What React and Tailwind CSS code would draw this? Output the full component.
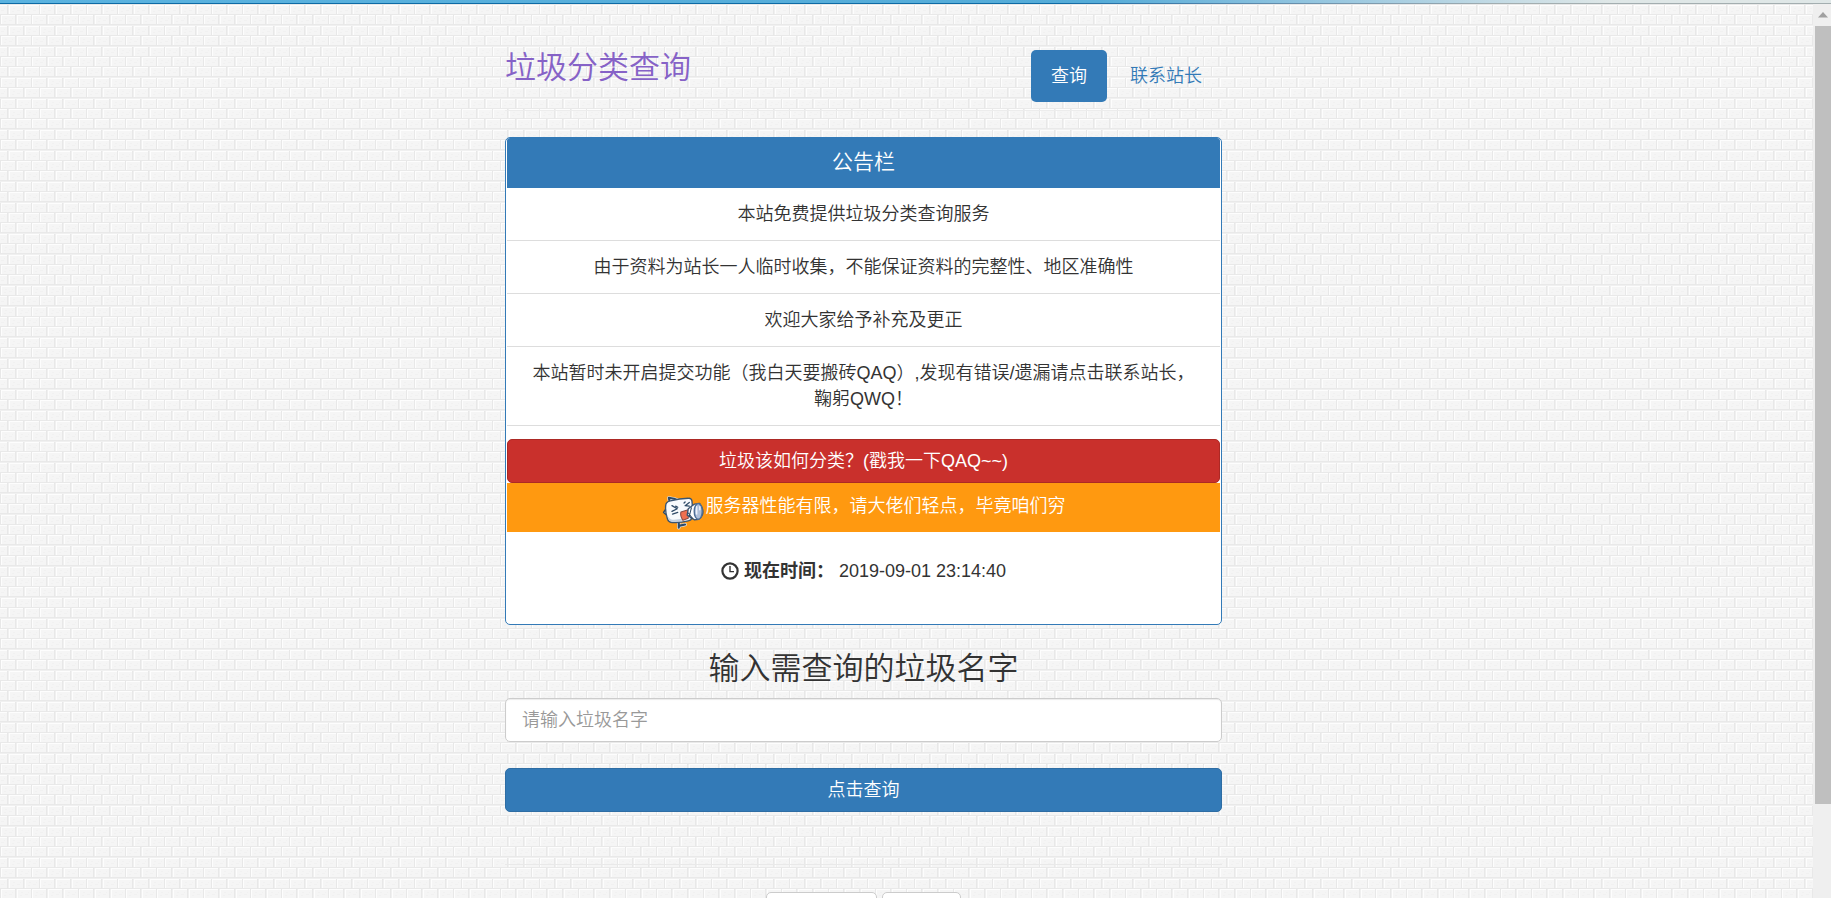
import React, { useState } from 'react';

const notices = [
    '本站免费提供垃圾分类查询服务',
    '由于资料为站长一人临时收集，不能保证资料的完整性、地区准确性',
    '欢迎大家给予补充及更正',
    '本站暂时未开启提交功能（我白天要搬砖QAQ）,发现有错误/遗漏请点击联系站长，鞠躬QWQ！',
];

// One wall tile: 8 bricks wide, 10 courses high
const bricks = [];
for (let row = 0; row < 10; row++) {
    for (let col = 0; col < 9; col++) {
        bricks.push({
            x: Math.round(col * 15.625 - (row % 2 ? 7.8 : 0)),
            y: Math.round(row * 10.4),
        });
    }
}

// Brick wall behind the whole page
const BrickWall = () => (
    <svg className="absolute inset-0 w-full h-full" aria-hidden="true">
        <defs>
            <pattern id="bricks" x="9" y="5" width="125" height="104" patternUnits="userSpaceOnUse">
                <rect width="125" height="104" fill="#f0f0f0" />
                {bricks.map(({ x, y }) => (
                    <g key={`${x}-${y}`} transform={`translate(${x} ${y})`}>
                        <rect width="14" height="9" fill="#f5f5f5" />
                        <path d="M0 .5h14M.5 0v9" stroke="#fdfdfd" />
                        <path d="M-1 9.500h15" stroke="#e9e9e9" />
                        <path d="M14.500 0v10" stroke="#e8e8e8" />
                        <path d="M4 3.500h2M8 5.500h3M3 6.500h2M11 3.500h1" stroke="#f1f1f1" />
                    </g>
                ))}
            </pattern>
        </defs>
        <rect width="100%" height="100%" fill="url(#bricks)" />
    </svg>
);

const ClockIcon = () => (
    <svg className="w-[18px] h-[18px]" viewBox="0 0 18 18" fill="none" stroke="#333" aria-hidden="true">
        <circle cx="9" cy="9" r="7.6" strokeWidth="2.2" />
        <path d="M9 4v5.600h4" strokeWidth="1.4" />
    </svg>
);

const MegaphoneFace = () => (
    <svg className="w-[42px] h-[34px] shrink-0" viewBox="0 0 40 32" fill="none" strokeLinejoin="round" strokeLinecap="round" aria-hidden="true">
        <path d="m7 4-.5-2.500 5 1 3 1M16 25v5M17 28l5-1" stroke="#e8ecf0" strokeWidth="3.200" />
        <path d="m7 4-.5-2.500 5 1 3 1M16 25v5M17 28l5-1" stroke="#2f4a66" strokeWidth="2" />
        <path d="M3 13 1.500 15.500l2.500 2" stroke="#2f4a66" strokeWidth="1.400" fill="#fff" />
        <path d="M8 4.500Q17 2 25 2q3-.5 3.500 2.500Q29.500 12 28 21q0 2-3 2.500Q17 25.500 10 25q-4 0-5-4Q3 15 3.500 9q0-3.500 4.500-4.500z" fill="#f8fafc" stroke="#3b5571" strokeWidth="1.300" />
        <path d="M5.500 19q2 3.500 6 3.500l8-1v2L10 24.300Q6 24 5.500 19z" fill="#c3d0de" />
        <path d="m9.500 9 5 3-5 2.500M10 17l5-1.500M13 9.500l2 1M26 6l-4 3 4 .5M22 5.500l-1 1" stroke="#2f4a66" strokeWidth="1.200" />
        <path d="m18 15 7-2v8l-5 2q-3-4-2-8z" fill="#f1704f" stroke="#8a4a44" />
        <path d="m25 12 6-4.500 5-.5q3 4 3 8t-4 7l-4 .5-7-4.500z" fill="#fff" stroke="#3b5571" strokeWidth="1.300" />
        <ellipse cx="34.500" cy="14.500" rx="3.800" ry="7.500" fill="#aebfd9" stroke="#4f6f96" strokeWidth="1.300" />
        <path d="M33 10v7M36 10v3" stroke="#eef3fa" strokeWidth="1.400" />
        <path d="m28 11-2 8M25 16l4 5" stroke="#2f4a66" />
    </svg>
);

const ScrollTrack = () => (
    <div className="relative w-[18px] shrink-0 bg-[#efefef] pl-[2px] flex flex-col" aria-hidden="true">
        <div className="h-[22px] flex items-center justify-center">
            <svg className="w-[10px] h-[6px]" viewBox="0 0 10 6"><path d="M5 0 10 5.500H0z" fill="#a0a0a0" /></svg>
        </div>
        <div className="h-[87%] bg-[#bfbfbf]" />
    </div>
);

const App = () => {
    const [keyword, setKeyword] = useState('');

    return (
        <div className="relative h-screen flex flex-col overflow-hidden bg-[#f4f4f4] text-[18px] leading-[26px] font-[350] text-[#333] font-['Liberation_Sans','Noto_Sans_CJK_SC',sans-serif]">
            <BrickWall />
            <div className="relative h-1 shrink-0 flex flex-col">
                <div className="h-[3px] bg-linear-to-r from-[#5bb3e0] from-0% via-[#55acd8] via-60% to-[#dfe7e7] to-88%" />
                <div className="h-px bg-linear-to-r from-[#0e6ba5] from-0% via-[#0e6ba5] via-58% to-[#a3aeb0] to-82%" />
            </div>

            <div className="flex flex-1 min-h-0">
                <div className="relative flex-1 overflow-y-auto [scrollbar-width:none] pr-[86px]">
                    <div className="w-full max-w-[717px] mx-auto pt-[46px]">
                        <header className="flex justify-between border-b border-[#ececec] pb-2">
                            <h1 className="text-[31px] leading-[36px] text-[#8662c7]">垃圾分类查询</h1>
                            <nav className="flex gap-[3px]">
                                <a href="#query" className="px-5 py-[13px] rounded-[5px] bg-[#337ab7] text-white">查询</a>
                                <a href="#contact" className="px-5 py-[13px] rounded-[5px] text-[#337ab7]">联系站长</a>
                            </nav>
                        </header>

                        <section className="mt-[26px] border border-[#337ab7] rounded-[5px] bg-white px-px pb-[40px] text-center">
                            <h2 className="bg-[#337ab7] text-white text-[21px] leading-[24px] pt-3 pb-[14px] rounded-t-[3px]">公告栏</h2>
                            <ul>
                                {notices.map((notice) => (
                                    <li key={notice} className="px-5 py-[13px] border-b border-[#ddd]">{notice}</li>
                                ))}
                            </ul>
                            <button type="button" className="block w-full mt-[13px] py-2 rounded-[5px] border border-[#ac2925] bg-[#c9302c] text-white">
                                垃圾该如何分类？(戳我一下QAQ~~)
                            </button>
                            <div className="flex justify-center gap-[2px] bg-[#ff9910] text-white h-[49px] pt-[10px]">
                                <span className="pt-[3px]"><MegaphoneFace /></span>
                                <span>服务器性能有限，请大佬们轻点，毕竟咱们穷</span>
                            </div>
                            <p className="flex items-center justify-center gap-[5px] pt-[26px]">
                                <ClockIcon />
                                <b className="font-bold">现在时间：</b>
                                <time>2019-09-01 23:14:40</time>
                            </p>
                        </section>

                        <form id="query" onSubmit={(e) => e.preventDefault()}>
                            <label htmlFor="keyword" className="block mt-[26px] mb-[11px] text-center text-[31px] leading-[36px]">输入需查询的垃圾名字</label>
                            <input id="keyword" type="text" value={keyword} onChange={(e) => setKeyword(e.target.value)} placeholder="请输入垃圾名字" className="block w-full h-11 px-4 rounded-[5px] border border-[#ccc] bg-white shadow-[inset_0_1px_1px_rgba(0,0,0,0.08)] placeholder:text-[#999]" />
                            <button type="submit" className="block w-full h-11 mt-[26px] rounded-[5px] border border-[#2e6da4] bg-[#337ab7] text-white">点击查询</button>
                        </form>

                        <hr className="mt-[52px] border-[#e9e9e9]" />
                        <div className="flex justify-center gap-[5px] mt-[27px] pb-10">
                            <button type="button" aria-label="上一页" className="w-[111px] h-11 rounded-[5px] border border-[#ccc] bg-white" />
                            <button type="button" aria-label="下一页" className="w-[79px] h-11 rounded-[5px] border border-[#ccc] bg-white" />
                        </div>
                    </div>
                </div>
                <ScrollTrack />
            </div>
        </div>
    );
};

export default App;
